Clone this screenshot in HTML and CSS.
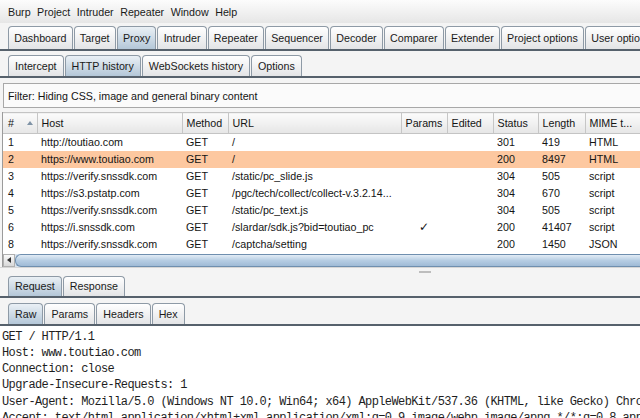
FILE: index.html
```html
<!DOCTYPE html>
<html>
<head>
<meta charset="utf-8">
<link rel="stylesheet" href="styles.css">
</head>
<body>
<div class="menubar">
  <span>Burp</span><span>Project</span><span>Intruder</span><span>Repeater</span><span>Window</span><span>Help</span>
</div>
<div class="tabs main">
  <div class="tab">Dashboard</div>
  <div class="tab">Target</div>
  <div class="tab sel">Proxy</div>
  <div class="tab">Intruder</div>
  <div class="tab">Repeater</div>
  <div class="tab">Sequencer</div>
  <div class="tab">Decoder</div>
  <div class="tab">Comparer</div>
  <div class="tab">Extender</div>
  <div class="tab">Project options</div>
  <div class="tab">User options</div>
</div>
<div class="tabs sub">
  <div class="tab">Intercept</div>
  <div class="tab sel">HTTP history</div>
  <div class="tab">WebSockets history</div>
  <div class="tab">Options</div>
</div>
<div class="filter">Filter: Hiding CSS, image and general binary content</div>
<div class="tablewrap">
  <table class="history">
    <colgroup>
      <col class="c-num"><col class="c-host"><col class="c-method"><col class="c-url"><col class="c-params"><col class="c-edited"><col class="c-status"><col class="c-length"><col class="c-mime">
    </colgroup>
    <thead>
      <tr>
        <th class="first"><div class="sorthead"><span>#</span><span class="sortarrow"></span></div></th>
        <th>Host</th><th>Method</th><th>URL</th><th>Params</th><th>Edited</th><th>Status</th><th>Length</th><th>MIME t...</th>
      </tr>
    </thead>
    <tbody>
      <tr><td class="first">1</td><td>http://toutiao.com</td><td>GET</td><td>/</td><td></td><td></td><td>301</td><td>419</td><td>HTML</td></tr>
      <tr class="hl"><td class="first">2</td><td>https://www.toutiao.com</td><td>GET</td><td>/</td><td></td><td></td><td>200</td><td>8497</td><td>HTML</td></tr>
      <tr><td class="first">3</td><td>https://verify.snssdk.com</td><td>GET</td><td>/static/pc_slide.js</td><td></td><td></td><td>304</td><td>505</td><td>script</td></tr>
      <tr><td class="first">4</td><td>https://s3.pstatp.com</td><td>GET</td><td>/pgc/tech/collect/collect-v.3.2.14...</td><td></td><td></td><td>304</td><td>670</td><td>script</td></tr>
      <tr><td class="first">5</td><td>https://verify.snssdk.com</td><td>GET</td><td>/static/pc_text.js</td><td></td><td></td><td>304</td><td>505</td><td>script</td></tr>
      <tr><td class="first">6</td><td>https://i.snssdk.com</td><td>GET</td><td>/slardar/sdk.js?bid=toutiao_pc</td><td class="check">✓</td><td></td><td>200</td><td>41407</td><td>script</td></tr>
      <tr><td class="first">8</td><td>https://verify.snssdk.com</td><td>GET</td><td>/captcha/setting</td><td></td><td></td><td>200</td><td>1450</td><td>JSON</td></tr>
    </tbody>
  </table>
  <div class="hscroll">
    <div class="sbtn"><span class="larrow"></span></div>
    <div class="thumb"></div>
  </div>
</div>
<div class="splitter"><span class="grip"></span></div>
<div class="tabs reqtabs">
  <div class="tab sel">Request</div>
  <div class="tab">Response</div>
</div>
<div class="tabs rawtabs">
  <div class="tab sel">Raw</div>
  <div class="tab">Params</div>
  <div class="tab">Headers</div>
  <div class="tab">Hex</div>
</div>
<pre class="raw">GET / HTTP/1.1
Host: www.toutiao.com
Connection: close
Upgrade-Insecure-Requests: 1
User-Agent: Mozilla/5.0 (Windows NT 10.0; Win64; x64) AppleWebKit/537.36 (KHTML, like Gecko) Chrome/78.0.3904.108 Safari/537.36
Accept: text/html,application/xhtml+xml,application/xml;q=0.9,image/webp,image/apng,*/*;q=0.8,application/signed-exchange;v=b3</pre>
</body>
</html>
```
FILE: styles.css
```css
* { box-sizing: border-box; }
html, body { margin: 0; padding: 0; }
body {
  width: 640px;
  height: 418px;
  overflow: hidden;
  background: #f4f4f4;
  font-family: "Liberation Sans", Arial, sans-serif;
  font-size: 10.7px;
  color: #141414;
}
.menubar {
  height: 23px;
  display: flex;
  align-items: center;
  gap: 6.5px;
  padding-left: 8px;
  background: linear-gradient(#fcfcfc, #e6e6e6);
  color: #1a1a1a;
}
.tabs {
  display: flex;
  gap: 1px;
  padding-left: 8px;
  border-bottom: 2px solid #56616c;
  white-space: nowrap;
}
.tab {
  display: flex;
  align-items: center;
  flex: none;
  padding: 0 6px;
  border: 1px solid #8e9aa6;
  border-bottom: none;
  border-radius: 4px 4px 0 0;
  background: linear-gradient(#ffffff, #e3e4e6);
  color: #1a1a1a;
}
.tab.sel {
  background: linear-gradient(#eaf0f5, #b4c7d8);
}
.tabs.main { padding-top: 3px; }
.tabs.main .tab { height: 23px; padding: 0 5.2px; }
.tabs.sub { margin-top: 3px; padding-top: 1px; }
.tabs.sub .tab { height: 21px; }
.filter {
  margin: 5px 0 0 3px;
  width: 650px;
  height: 25px;
  border: 1px solid #a8a8a8;
  background: #fbfbfb;
  padding-left: 4px;
  display: flex;
  align-items: center;
}
.tablewrap {
  margin: 4px 0 0 2px;
  border-left: 1px solid #9b9b9b;
  background: #ffffff;
  overflow: hidden;
}
.history {
  width: 637px;
  table-layout: fixed;
  border-collapse: collapse;
}
.c-num { width: 34px; }
.c-host { width: 145px; }
.c-method { width: 46px; }
.c-url { width: 173px; }
.c-params { width: 46px; }
.c-edited { width: 46px; }
.c-status { width: 45px; }
.c-length { width: 47px; }
.c-mime { width: 55px; }
.history th {
  height: 21px;
  padding: 0 0 0 4px;
  text-align: left;
  font-weight: normal;
  background: linear-gradient(#fbfbfb, #e6e6e6);
  border-top: 1px solid #c4c4c4;
  border-bottom: 1px solid #c4c4c4;
  border-right: 1px solid #c6c6c6;
  white-space: nowrap;
  overflow: hidden;
}
.history td {
  height: 17px;
  padding: 0 0 0 4px;
  white-space: nowrap;
  overflow: hidden;
}
.history .first { padding-left: 5px; }
.history tr.hl td { background: #fdc8a0; }
.history td.check { text-align: center; padding-left: 0; font-family: "DejaVu Sans", sans-serif; font-size: 12px; }
.sorthead {
  display: flex;
  align-items: center;
  justify-content: space-between;
  padding-right: 4px;
}
.sortarrow {
  width: 0;
  height: 0;
  border-left: 3px solid transparent;
  border-right: 3px solid transparent;
  border-bottom: 4px solid #7f93a6;
}
.hscroll {
  display: flex;
  height: 13px;
  margin-top: 1px;
  background: #d9e3ed;
}
.sbtn {
  width: 12px;
  flex: none;
  display: flex;
  align-items: center;
  justify-content: center;
  background: linear-gradient(#fafafa, #d8d8d8);
  border: 1px solid #b0b0b0;
}
.larrow {
  width: 0;
  height: 0;
  border-top: 3px solid transparent;
  border-bottom: 3px solid transparent;
  border-right: 4px solid #333;
}
.thumb {
  flex: 1;
  border: 1px solid #6f8faf;
  border-right: none;
  border-radius: 6px 0 0 6px;
  background: linear-gradient(#e2ecf6, #b6cde3 50%, #9fbad6);
}
.splitter {
  height: 9px;
  border-top: 1px solid #d6d6d6;
  display: flex;
  justify-content: center;
  padding-left: 210px;
  padding-top: 3px;
}
.grip {
  width: 12px;
  height: 2px;
  background: #bdbdbd;
}
.tabs.reqtabs .tab { height: 20px; }
.tabs.rawtabs { margin-top: 5px; }
.tabs.rawtabs .tab { height: 21px; }
.raw {
  margin: 0;
  padding: 3px 0 0 2px;
  background: #ffffff;
  height: 100px;
  font-family: "Liberation Mono", "Courier New", monospace;
  font-size: 12px;
  letter-spacing: -0.6px;
  line-height: 16.3px;
  color: #1e1e1e;
  white-space: pre;
  overflow: hidden;
}
```
